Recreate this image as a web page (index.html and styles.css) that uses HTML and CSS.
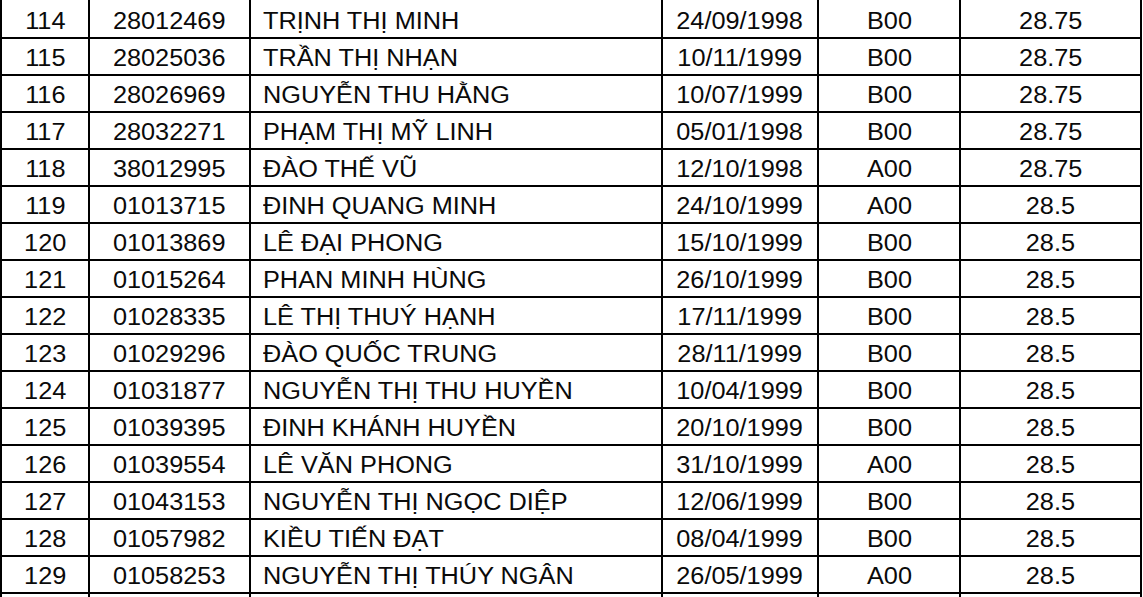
FILE: index.html
```html
<!DOCTYPE html>
<html lang="vi">
<head>
<meta charset="utf-8">
<title>Danh sách</title>
<link rel="stylesheet" href="styles.css">
</head>
<body>
<div class="sheet">
  <div class="row"><div class="c"><span class="t">114</span></div><div class="c"><span class="t">28012469</span></div><div class="c name"><span class="t">TRỊNH THỊ MINH</span></div><div class="c"><span class="t">24/09/1998</span></div><div class="c"><span class="t">B00</span></div><div class="c"><span class="t">28.75</span></div></div>
  <div class="row"><div class="c"><span class="t">115</span></div><div class="c"><span class="t">28025036</span></div><div class="c name"><span class="t">TRẦN THỊ NHẠN</span></div><div class="c"><span class="t">10/11/1999</span></div><div class="c"><span class="t">B00</span></div><div class="c"><span class="t">28.75</span></div></div>
  <div class="row"><div class="c"><span class="t">116</span></div><div class="c"><span class="t">28026969</span></div><div class="c name"><span class="t">NGUYỄN THU HẰNG</span></div><div class="c"><span class="t">10/07/1999</span></div><div class="c"><span class="t">B00</span></div><div class="c"><span class="t">28.75</span></div></div>
  <div class="row"><div class="c"><span class="t">117</span></div><div class="c"><span class="t">28032271</span></div><div class="c name"><span class="t">PHẠM THỊ MỸ LINH</span></div><div class="c"><span class="t">05/01/1998</span></div><div class="c"><span class="t">B00</span></div><div class="c"><span class="t">28.75</span></div></div>
  <div class="row"><div class="c"><span class="t">118</span></div><div class="c"><span class="t">38012995</span></div><div class="c name"><span class="t">ĐÀO THẾ VŨ</span></div><div class="c"><span class="t">12/10/1998</span></div><div class="c"><span class="t">A00</span></div><div class="c"><span class="t">28.75</span></div></div>
  <div class="row"><div class="c"><span class="t">119</span></div><div class="c"><span class="t">01013715</span></div><div class="c name"><span class="t">ĐINH QUANG MINH</span></div><div class="c"><span class="t">24/10/1999</span></div><div class="c"><span class="t">A00</span></div><div class="c"><span class="t">28.5</span></div></div>
  <div class="row"><div class="c"><span class="t">120</span></div><div class="c"><span class="t">01013869</span></div><div class="c name"><span class="t">LÊ ĐẠI PHONG</span></div><div class="c"><span class="t">15/10/1999</span></div><div class="c"><span class="t">B00</span></div><div class="c"><span class="t">28.5</span></div></div>
  <div class="row"><div class="c"><span class="t">121</span></div><div class="c"><span class="t">01015264</span></div><div class="c name"><span class="t">PHAN MINH HÙNG</span></div><div class="c"><span class="t">26/10/1999</span></div><div class="c"><span class="t">B00</span></div><div class="c"><span class="t">28.5</span></div></div>
  <div class="row"><div class="c"><span class="t">122</span></div><div class="c"><span class="t">01028335</span></div><div class="c name"><span class="t">LÊ THỊ THUÝ HẠNH</span></div><div class="c"><span class="t">17/11/1999</span></div><div class="c"><span class="t">B00</span></div><div class="c"><span class="t">28.5</span></div></div>
  <div class="row"><div class="c"><span class="t">123</span></div><div class="c"><span class="t">01029296</span></div><div class="c name"><span class="t">ĐÀO QUỐC TRUNG</span></div><div class="c"><span class="t">28/11/1999</span></div><div class="c"><span class="t">B00</span></div><div class="c"><span class="t">28.5</span></div></div>
  <div class="row"><div class="c"><span class="t">124</span></div><div class="c"><span class="t">01031877</span></div><div class="c name"><span class="t">NGUYỄN THỊ THU HUYỀN</span></div><div class="c"><span class="t">10/04/1999</span></div><div class="c"><span class="t">B00</span></div><div class="c"><span class="t">28.5</span></div></div>
  <div class="row"><div class="c"><span class="t">125</span></div><div class="c"><span class="t">01039395</span></div><div class="c name"><span class="t">ĐINH KHÁNH HUYỀN</span></div><div class="c"><span class="t">20/10/1999</span></div><div class="c"><span class="t">B00</span></div><div class="c"><span class="t">28.5</span></div></div>
  <div class="row"><div class="c"><span class="t">126</span></div><div class="c"><span class="t">01039554</span></div><div class="c name"><span class="t">LÊ VĂN PHONG</span></div><div class="c"><span class="t">31/10/1999</span></div><div class="c"><span class="t">A00</span></div><div class="c"><span class="t">28.5</span></div></div>
  <div class="row"><div class="c"><span class="t">127</span></div><div class="c"><span class="t">01043153</span></div><div class="c name"><span class="t">NGUYỄN THỊ NGỌC DIỆP</span></div><div class="c"><span class="t">12/06/1999</span></div><div class="c"><span class="t">B00</span></div><div class="c"><span class="t">28.5</span></div></div>
  <div class="row"><div class="c"><span class="t">128</span></div><div class="c"><span class="t">01057982</span></div><div class="c name"><span class="t">KIỀU TIẾN ĐẠT</span></div><div class="c"><span class="t">08/04/1999</span></div><div class="c"><span class="t">B00</span></div><div class="c"><span class="t">28.5</span></div></div>
  <div class="row"><div class="c"><span class="t">129</span></div><div class="c"><span class="t">01058253</span></div><div class="c name"><span class="t">NGUYỄN THỊ THÚY NGÂN</span></div><div class="c"><span class="t">26/05/1999</span></div><div class="c"><span class="t">A00</span></div><div class="c"><span class="t">28.5</span></div></div>
  <div class="row last"><div class="c"></div><div class="c"></div><div class="c name"></div><div class="c"></div><div class="c"></div><div class="c"></div></div>
</div>
</body>
</html>
```

FILE: styles.css
```css
html, body {
  margin: 0;
  padding: 0;
  background: #ffffff;
  height: 597px;
  overflow: hidden;
}

.sheet {
  width: 1140px;
  height: 597px;
  overflow: hidden;
  border-left: 2px solid #000;
  font-family: "Liberation Sans", Arial, sans-serif;
  font-size: 23px;
  color: #0a0a0a;
}

.row {
  display: grid;
  grid-template-columns: 88px 161px 412px 156px 142px 181px;
}

.c {
  box-sizing: border-box;
  height: 37px;
  border-right: 2px solid #000;
  border-bottom: 2px solid #000;
  padding-top: 4px;
  line-height: 31px;
  text-align: center;
  white-space: nowrap;
  overflow: hidden;
}

.row:first-child .c {
  height: 39px;
  padding-top: 6px;
}

.c.name {
  text-align: left;
  padding-left: 12px;
}

.t {
  display: inline-block;
  transform: scaleX(1.1);
  transform-origin: center;
}

.name .t {
  transform-origin: left center;
}
```
